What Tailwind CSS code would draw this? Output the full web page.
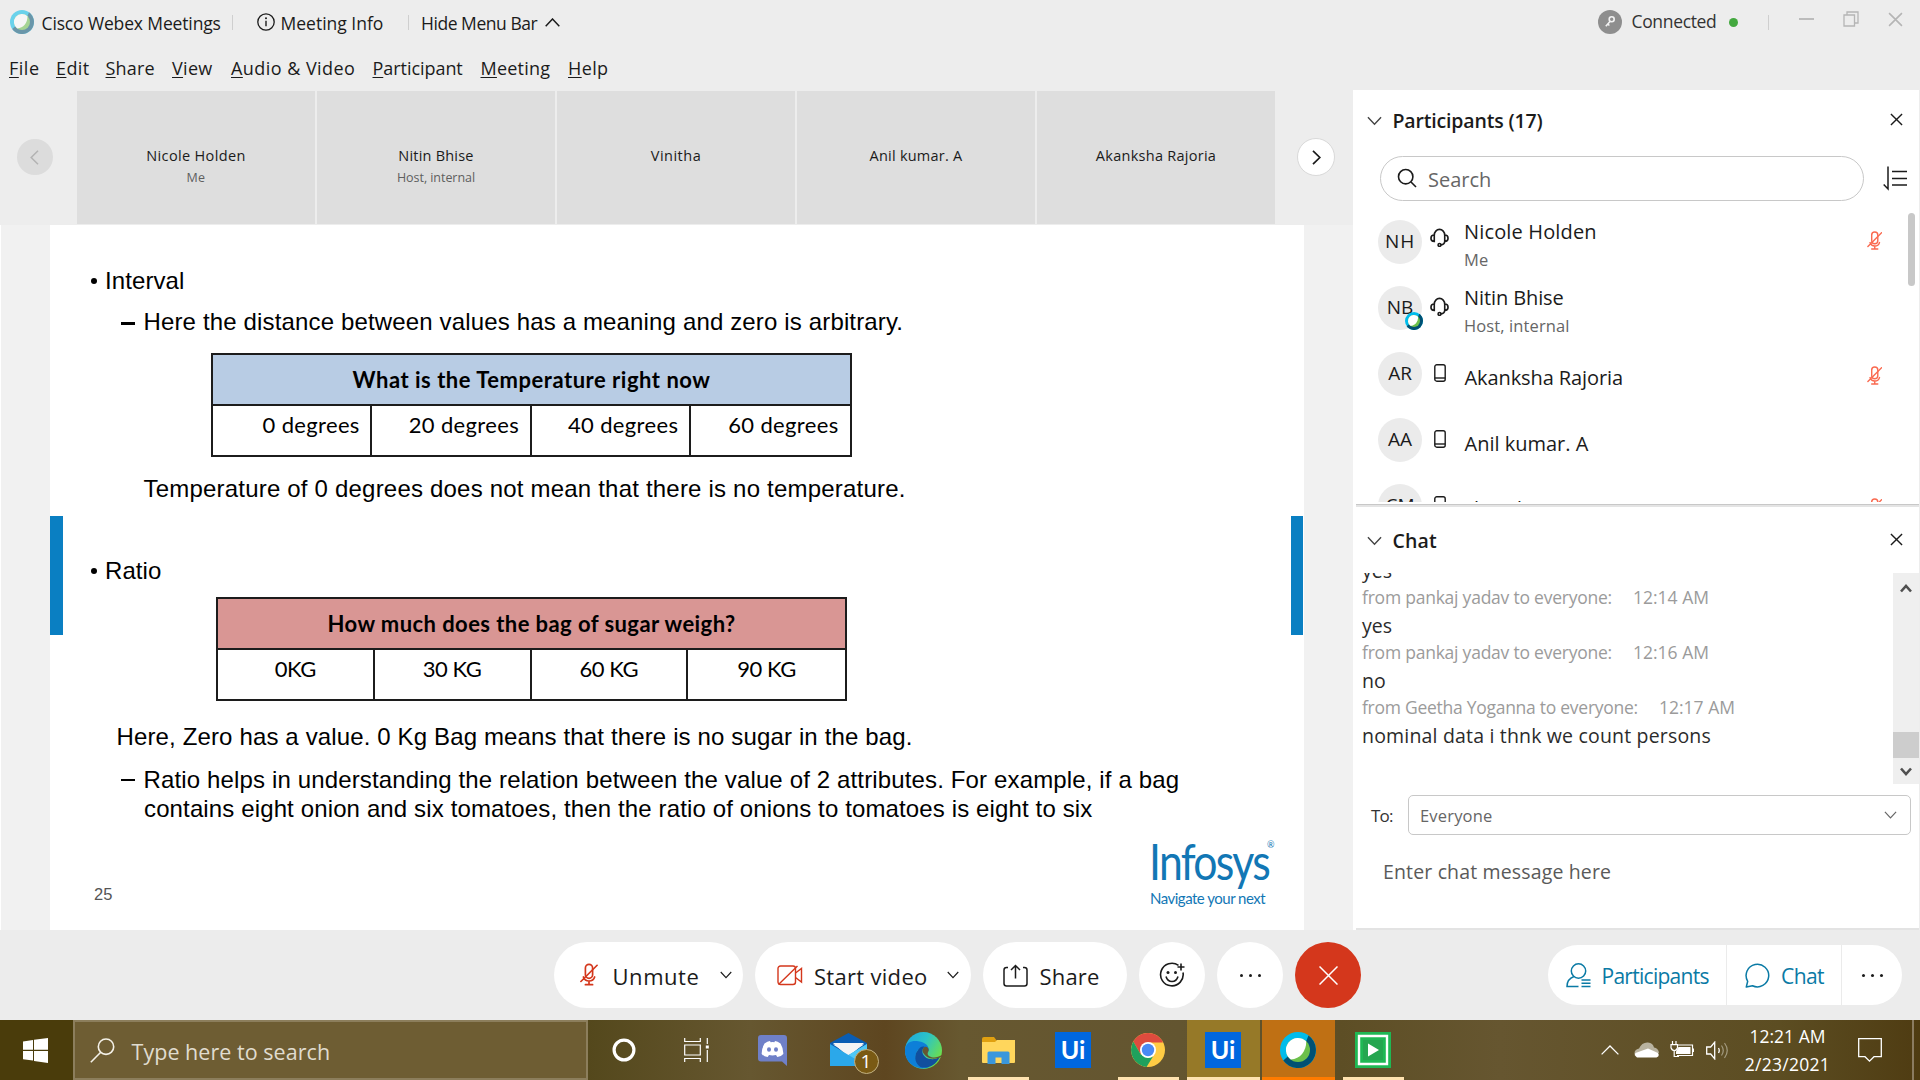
<!DOCTYPE html>
<html lang="en">
<head>
<meta charset="utf-8">
<title>Cisco Webex Meetings</title>
<script src="https://cdn.jsdelivr.net/npm/@tailwindcss/browser@4"></script>
</head>
<body class="w-[1920px] h-[1080px] overflow-hidden bg-[#ededed] font-['Open_Sans',sans-serif] text-[#1b1b1b] flex flex-col whitespace-nowrap">
<svg class="hidden">
  <symbol id="webex" viewBox="0 0 24 24">
    <circle cx="12" cy="12" r="12" fill="#00bceb"/>
    <path d="M19 2.3A12 12 0 1 1 2.2 19L5 16.5 17.5 6Z" fill="#005073"/>
    <circle cx="12" cy="12" r="8" fill="#6cc04a"/>
    <path d="M7.200 18.400A8 8 0 1 1 17.500 6.200C17.500 13 13.500 18 7.200 18.400Z" fill="#fff"/>
  </symbol>
  <symbol id="micoff" viewBox="0 0 16 20">
    <g fill="none" stroke="currentColor" stroke-width="1.5" stroke-linecap="round"><rect x="4.8" y="1" width="6.4" height="12.4" rx="3.2"/><path d="M3 12.2C4 15 6 15.8 8 15.8s4.200-.8 5-3.600M8 15.800v3M4.800 19h6.400M15.200 1.800.8 16.200"/></g>
  </symbol>
  <symbol id="headset" viewBox="0 0 20 20">
    <g fill="none" stroke="currentColor" stroke-width="1.7"><path d="M4.500 8.500V7.500a5.500 6 0 0 1 11 0v1M4.500 7.300C2 7.300 1 9 1 10.700s1 3.400 3.500 3.400ZM15.500 7.300c2.500 0 3.500 1.700 3.500 3.400s-1 3.400-3.500 3.400ZM15.500 14c0 2.500-2 3.600-4 3.800"/><circle cx="10" cy="17.800" r="1.500"/></g>
  </symbol>
  <symbol id="phone" viewBox="0 0 12 18">
    <g fill="none" stroke="currentColor" stroke-width="1.400"><rect x=".8" y=".8" width="10.400" height="16.400" rx="2"/><path d="M.8 14h10.400"/></g>
  </symbol>
  <symbol id="down" viewBox="0 0 16 10"><path d="M1 1l7 7.500L15 1" fill="none" stroke="currentColor" stroke-width="1.500"/></symbol>
  <symbol id="x" viewBox="0 0 14 14"><path d="M1 1l12 12M13 1L1 13" fill="none" stroke="currentColor" stroke-width="1.500"/></symbol>
</svg>

<header class="h-[90px] shrink-0">
  <div class="h-[44px] flex">
    <div class="w-[232px] flex pl-[10px]">
      <svg class="mt-[10px] size-6 opacity-55"><use href="#webex"/></svg>
      <span class="ml-[7.500px] mt-[11px] text-[17.5px] leading-6 tracking-[-0.14px]">Cisco Webex Meetings</span>
    </div>
    <div class="mt-[15px] w-px h-[15px] bg-[#cfcfcf]"></div>
    <div class="w-[174.500px] flex pl-[23.500px]">
      <svg class="mt-[13px] size-[18px]" viewBox="0 0 18 18"><circle cx="9" cy="9" r="8.200" fill="none" stroke="#1b1b1b" stroke-width="1.300"/><path d="M9 7.800v5.400" stroke="#1b1b1b" stroke-width="1.400"/><circle cx="9" cy="5.200" r="1" fill="#1b1b1b"/></svg>
      <span class="ml-[6px] mt-[11px] text-[17.5px] leading-6">Meeting Info</span>
    </div>
    <div class="mt-[15px] w-px h-[15px] bg-[#cfcfcf]"></div>
    <div class="flex pl-[12.500px]">
      <span class="mt-[11px] text-[17.5px] leading-6 tracking-[-0.46px]">Hide Menu Bar</span>
      <svg class="ml-[8px] mt-[18px] w-[15px] h-[9px]" viewBox="0 0 15 9"><path d="M.7 8.300 7.500 1l6.800 7.300" fill="none" stroke="#1b1b1b" stroke-width="1.500"/></svg>
    </div>
    <div class="ml-auto w-[322px] flex">
      <svg class="mt-[10px] size-6" viewBox="0 0 24 24"><circle cx="12" cy="12" r="12" fill="#8e8e8e"/><g fill="none" stroke="#f2f2f2" stroke-width="1.600"><circle cx="13.700" cy="9.300" r="2.500"/><path d="M12.200 11.300 7.800 16.200M9.800 14l1.600 1.500"/></g></svg>
      <span class="ml-[9.500px] w-[97.500px] mt-[9px] text-[17.500px] leading-6 tracking-[-0.34px] text-[#333]">Connected</span>
      <span class="mt-[18px] size-[9px] rounded-full bg-[#43a83f]"></span>
      <div class="mt-[15px] ml-[30px] w-px h-[15px] bg-[#cfcfcf]"></div>
      <div class="ml-[29.500px] mt-[18px] w-[15px] h-[2px] bg-[#bcbcbc]"></div>
      <svg class="ml-[29.500px] mt-[11px] w-[16px] h-[16px]" viewBox="0 0 16 16"><path d="M1 4h10.500v11H1zM4 4V1h11v11h-3.500" fill="none" stroke="#b5b5b5" stroke-width="1.300"/></svg>
      <svg class="ml-[29px] mt-[12px] size-[15px] text-[#b5b5b5]"><use href="#x"/></svg>
    </div>
  </div>
  <nav class="flex pl-[9px] pt-[12px] text-[18px] leading-6">
    <span class="w-[47px] tracking-[0.5px]"><u class="underline-offset-2">F</u>ile</span>
    <span class="w-[49.500px] tracking-[0.4px]"><u class="underline-offset-2">E</u>dit</span>
    <span class="w-[66.500px] tracking-[0.2px]"><u class="underline-offset-2">S</u>hare</span>
    <span class="w-[59px] tracking-[0.3px]"><u class="underline-offset-2">V</u>iew</span>
    <span class="w-[141.500px] tracking-[0.45px]"><u class="underline-offset-2">A</u>udio &amp; Video</span>
    <span class="w-[108px] tracking-[-0.05px]"><u class="underline-offset-2">P</u>articipant</span>
    <span class="w-[87.500px] tracking-[0.22px]"><u class="underline-offset-2">M</u>eeting</span>
    <span class="tracking-[0.4px]"><u class="underline-offset-2">H</u>elp</span>
  </nav>
</header>

<main class="h-[840px] shrink-0 flex">
  <section class="w-[1353px] flex flex-col">
    <div class="h-[135px] flex pt-px">
      <div class="w-[77px] pt-[48px] pl-[17px]">
        <div class="size-9 rounded-full bg-[#dcdcdc] flex items-center justify-center pr-px"><svg class="w-[9px] h-[15px]" viewBox="0 0 9 15"><path d="M8 .8 1.200 7.500 8 14.200" fill="none" stroke="#b3b3b3" stroke-width="1.500"/></svg></div>
      </div>
      <div class="flex gap-[2px] h-[133px] text-center text-[14.500px] leading-5">
        <div class="w-[238px] bg-[#dedede] pt-[55px] tracking-[0.35px]">Nicole Holden<div class="text-[12.500px] text-[#5f5f5f] tracking-[0.3px] mt-[2px]">Me</div></div>
        <div class="w-[238px] bg-[#dedede] pt-[55px] tracking-[0.21px]">Nitin Bhise<div class="text-[12.500px] text-[#5f5f5f] tracking-[-0.05px] mt-[2px]">Host, internal</div></div>
        <div class="w-[238px] bg-[#dedede] pt-[55px] tracking-[0.5px]">Vinitha</div>
        <div class="w-[238px] bg-[#dedede] pt-[55px] tracking-[0.24px]">Anil kumar. A</div>
        <div class="w-[238px] bg-[#dedede] pt-[55px] tracking-[0.27px]">Akanksha Rajoria</div>
      </div>
      <div class="pt-[47px] pl-[22px]">
        <div class="size-[38px] rounded-full bg-white border border-[#d9d9d9] flex items-center justify-center"><svg class="w-[9px] h-[15px]" viewBox="0 0 9 15"><path d="M1 .8 7.800 7.500 1 14.200" fill="none" stroke="#1b1b1b" stroke-width="1.700"/></svg></div>
      </div>
    </div>
    <div class="h-[705px] flex bg-[#f1f1f1]">
      <div class="w-px bg-white"></div>
      <article class="ml-[49px] w-[1254px] bg-white flex font-['Liberation_Sans',sans-serif] text-black text-[24px]">
        <div class="w-[13px] h-[119px] mt-[291px] shrink-0 bg-[#0a7fc2]"></div>
        <div class="w-[1228px] shrink-0 pt-[41px] flex flex-col leading-[30px]">
          <div class="flex items-center pl-[28px]"><span class="size-[6px] rounded-full bg-black"></span><span class="ml-[8px] tracking-[0.1px]">Interval</span></div>
          <div class="mt-[11px] flex pl-[58px]"><span class="w-[14px] h-[2.500px] bg-black mt-[15px]"></span><span class="ml-[8.500px] tracking-[0.15px]">Here the distance between values has a meaning and zero is arbitrary.</span></div>
          <div class="mt-[16px] ml-[148px] w-[641px] h-[104px] border-2 border-[#1c1c1c] flex flex-col font-['Lato',sans-serif] text-[22px]">
            <div class="h-[51px] bg-[#b8cce4] border-b-2 border-[#1c1c1c] flex justify-center font-bold leading-[50px] tracking-[0.52px]">What is the Temperature right now</div>
            <div class="grow grid grid-cols-4 text-right leading-[38px] tracking-[0.34px] divide-x-2 divide-[#1c1c1c]">
              <div class="pr-[10.500px]">0 degrees</div><div class="pr-[10.500px]">20 degrees</div><div class="pr-[10.500px]">40 degrees</div><div class="pr-[11.500px]">60 degrees</div>
            </div>
          </div>
          <div class="mt-[16.500px] pl-[80.500px] tracking-[0.2px]">Temperature of 0 degrees does not mean that there is no temperature.</div>
          <div class="mt-[52.500px] flex items-center pl-[28px]"><span class="size-[6px] rounded-full bg-black"></span><span class="ml-[8px] tracking-[0.08px]">Ratio</span></div>
          <div class="mt-[11px] ml-[153px] w-[631px] h-[104px] border-2 border-[#1c1c1c] flex flex-col font-['Lato',sans-serif] text-[22px]">
            <div class="h-[51px] bg-[#d99694] border-b-2 border-[#1c1c1c] flex justify-center font-bold leading-[50px] tracking-[0.43px]">How much does the bag of sugar weigh?</div>
            <div class="grow grid grid-cols-4 text-center leading-[38px] tracking-[-0.45px] divide-x-2 divide-[#1c1c1c]">
              <div>0KG</div><div>30 KG</div><div>60 KG</div><div>90 KG</div>
            </div>
          </div>
          <div class="mt-[20.500px] pl-[53.500px] tracking-[0.14px]">Here, Zero has a value. 0 Kg Bag means that there is no sugar in the bag.</div>
          <div class="mt-[13px] flex pl-[58px] leading-[29px]"><span class="w-[14px] h-[2.500px] bg-black mt-[14px]"></span><div class="ml-[8.500px]"><div class="tracking-[0.14px]">Ratio helps in understanding the relation between the value of 2 attributes. For example, if a bag</div><div class="tracking-[0.13px] pl-[0.500px]">contains eight onion and six tomatoes, then the ratio of onions to tomatoes is eight to six</div></div></div>
          <div class="flex mt-[15.500px] h-[85px]">
            <span class="mt-[36px] ml-[31px] text-[16.500px] text-[#555] leading-[40px]">25</span>
            <div class="ml-auto -mt-[5px] w-[142px] flex flex-col font-['Lato',sans-serif] text-[#1277b5]">
              <div class="flex h-[52px]"><span class="w-[118px] origin-left scale-x-[0.855] text-[50px] leading-[60px] tracking-[-2px] -mt-[2px]">Infosys</span><span class="text-[9px] leading-[10px] mt-[7px]">®</span></div>
              <span class="ml-px text-[15px] leading-[20px] tracking-[-0.5px] mt-[3px]">Navigate your next</span>
            </div>
          </div>
        </div>
        <div class="w-[12px] h-[119px] mt-[291px] shrink-0 bg-[#0a7fc2]"></div>
      </article>
    </div>
  </section>

  <aside class="w-[565.500px] bg-white flex flex-col">
    <div class="h-[66px] shrink-0 flex pl-[14px]">
      <svg class="w-[15px] h-[10px] mt-[26px] text-[#444]"><use href="#down"/></svg>
      <span class="ml-[10.500px] mt-[16.500px] text-[19.500px] leading-[28px] font-semibold tracking-[-0.16px]">Participants (17)</span>
      <svg class="ml-auto mr-[15.500px] mt-[23px] size-[13px]"><use href="#x"/></svg>
    </div>
    <div class="h-[44.500px] shrink-0 flex pl-[27px]">
      <div class="w-[484px] rounded-full border-[1.500px] border-[#c8c8c8] flex items-center pl-[16px]">
        <svg class="size-[20px]" viewBox="0 0 20 20"><g fill="none" stroke="#1b1b1b" stroke-width="1.600"><circle cx="8.700" cy="8.700" r="7.200"/><path d="m14 14 5 5"/></g></svg>
        <span class="ml-[11px] text-[20px] leading-[28px] mt-[3px] text-[#666]">Search</span>
      </div>
      <svg class="ml-[19px] mt-[10px] w-[25px] h-[25px]" viewBox="0 0 25 25"><path d="M5 .5v22.500L.7 18.500M9 5.500h15M9 12.500h15M9 19h15" fill="none" stroke="#1b1b1b" stroke-width="1.500"/></svg>
    </div>
    <div class="h-[301.500px] shrink-0 flex">
      <div class="w-[555px] pt-[8px] overflow-hidden text-[20px] leading-[26px]">
        <div class="h-[66px] flex pl-[25px]">
          <span class="mt-[11px] size-[44px] rounded-full bg-[#ebebeb] text-[19px] leading-[43px] text-center tracking-[0.8px]">NH</span>
          <svg class="ml-[8px] mt-[19.500px] size-[19px]"><use href="#headset"/></svg>
          <div class="ml-[15px] mt-[10.500px] tracking-[0.15px]">Nicole Holden<div class="text-[16.500px] leading-[22px] mt-[3.500px] text-[#666]">Me</div></div>
          <svg class="ml-auto mr-[26px] mt-[22.500px] w-[15.500px] h-[19px] text-[#fa6a50]"><use href="#micoff"/></svg>
        </div>
        <div class="h-[66px] flex pl-[25px]">
          <span class="relative mt-[11px] size-[44px] rounded-full bg-[#ebebeb] text-[19px] leading-[43px] text-center">NB<svg class="absolute -right-px bottom-0 size-[18px]"><use href="#webex"/></svg></span>
          <svg class="ml-[8px] mt-[22.500px] size-[19px]"><use href="#headset"/></svg>
          <div class="ml-[15px] mt-[10.500px] tracking-[-0.1px]">Nitin Bhise<div class="text-[16.500px] leading-[22px] mt-[3.500px] text-[#666] tracking-[0.11px]">Host, internal</div></div>
        </div>
        <div class="h-[66px] flex pl-[25px]">
          <span class="mt-[11px] size-[44px] rounded-full bg-[#ebebeb] text-[19px] leading-[43px] text-center">AR</span>
          <svg class="ml-[11.500px] mt-[23px] w-[12px] h-[18px]"><use href="#phone"/></svg>
          <div class="ml-[19px] mt-[24.500px] tracking-[-0.09px]">Akanksha Rajoria</div>
          <svg class="ml-auto mr-[26px] mt-[25.500px] w-[15.500px] h-[19px] text-[#fa6a50]"><use href="#micoff"/></svg>
        </div>
        <div class="h-[66px] flex pl-[25px]">
          <span class="mt-[11px] size-[44px] rounded-full bg-[#ebebeb] text-[19px] leading-[43px] text-center">AA</span>
          <svg class="ml-[11.500px] mt-[23px] w-[12px] h-[18px]"><use href="#phone"/></svg>
          <div class="ml-[19px] mt-[24.500px]">Anil kumar. A</div>
        </div>
        <div class="h-[66px] flex pl-[25px]">
          <span class="mt-[11px] size-[44px] rounded-full bg-[#ebebeb] text-[19px] leading-[43px] text-center">CM</span>
          <svg class="ml-[11.500px] mt-[23px] w-[12px] h-[18px]"><use href="#phone"/></svg>
          <div class="ml-[19px] mt-[23.500px]">chandra m</div>
          <svg class="ml-auto mr-[26px] mt-[25.500px] w-[15.500px] h-[19px] text-[#fa6a50]"><use href="#micoff"/></svg>
        </div>
      </div>
      <div class="mt-[12.500px] w-[7px] h-[73px] rounded-full bg-[#c8c8c8]"></div>
    </div>
    <div class="mt-[2px] ml-[3px] h-[3px] shrink-0 bg-[#e4e4e4] border-t border-[#c8c8c8]"></div>
    <div class="h-[66px] shrink-0 flex pl-[14px]">
      <svg class="w-[15px] h-[10px] mt-[28.500px] text-[#444]"><use href="#down"/></svg>
      <span class="ml-[10.500px] mt-[19.500px] text-[19.500px] leading-[28px] font-semibold tracking-[0.11px]">Chat</span>
      <svg class="ml-auto mr-[15.500px] mt-[25.500px] size-[13px]"><use href="#x"/></svg>
    </div>
    <div class="h-[211px] shrink-0 flex overflow-hidden">
      <div class="w-[540px] pl-[9px] text-[19.500px] leading-[27.500px] text-[#2b2b2b] overflow-hidden">
        <div class="-mt-[17px] pt-px -mb-px">yes</div>
        <div class="flex text-[17.500px] text-[#9b9b9b]"><span class="w-[271px] tracking-[-0.23px]">from pankaj yadav to everyone:</span>12:14 AM</div>
        <div class="pt-px -mb-px">yes</div>
        <div class="flex text-[17.500px] text-[#9b9b9b]"><span class="w-[271px] tracking-[-0.23px]">from pankaj yadav to everyone:</span>12:16 AM</div>
        <div class="pt-px -mb-px">no</div>
        <div class="flex text-[17.500px] text-[#9b9b9b]"><span class="w-[297px] tracking-[-0.27px]">from Geetha Yoganna to everyone:</span>12:17 AM</div>
        <div class="pt-px tracking-[0.18px]">nominal data i thnk we count persons</div>
      </div>
      <div class="grow bg-[#efefef] flex flex-col items-center">
        <svg class="mt-[10.500px] w-[12px] h-[9px]" viewBox="0 0 12 9"><path d="M1 7.500 6 2l5 5.500" fill="none" stroke="#505050" stroke-width="2.600"/></svg>
        <div class="mt-[139.500px] w-full h-[26px] bg-[#cdcdcd]"></div>
        <svg class="mt-[9px] w-[12px] h-[9px]" viewBox="0 0 12 9"><path d="M1 1.500 6 7l5-5.500" fill="none" stroke="#505050" stroke-width="2.600"/></svg>
      </div>
    </div>
    <div class="mt-[11px] shrink-0 h-[39.500px] flex pl-[18px] pr-[7.500px]">
      <span class="w-[37px] pt-px text-[17px] leading-[40px] tracking-[-0.8px] text-[#333]">To:</span>
      <div class="grow border-[1.500px] border-[#c8c8c8] rounded-[5px] flex items-center pl-[11px] pr-[13px] text-[16.500px] tracking-[0.18px] text-[#666]"><span class="mt-[4px]">Everyone</span><svg class="ml-auto w-[13px] h-[8px] mt-px"><use href="#down"/></svg></div>
    </div>
    <div class="pl-[30px] mt-[23.500px] text-[19.500px] leading-[28px] tracking-[0.15px] text-[#5a5a5a]">Enter chat message here</div>
    <div class="mt-auto h-[2px] ml-[3px] bg-[#e3e3e3]"></div>
  </aside>
</main>

<div class="h-[90px] shrink-0 bg-[#ececec] flex pt-[12px] pl-[554px] pr-[18px]">
  <div class="flex gap-[12px] h-[66px] text-[22px]">
    <div class="w-[189px] rounded-full bg-white flex items-center pl-[26px]">
      <svg class="w-[18px] h-[23px] -mt-[2px] text-[#d4371c]"><use href="#micoff"/></svg><span class="ml-[14.500px] w-[107px] mt-[3px] tracking-[0.55px]">Unmute</span><svg class="w-[12px] h-[8px] -mt-px"><use href="#down"/></svg>
    </div>
    <div class="w-[216px] rounded-full bg-white flex items-center pl-[22px]">
      <svg class="w-[26px] h-[21px]" viewBox="0 0 26 21"><g fill="none" stroke="#d4371c" stroke-width="1.400"><rect x="1" y="1" width="17.500" height="18.500" rx="2.500"/><path d="M18.500 12.500 24.500 17V3.500L18.500 8M1.500 19.500 20.500 1"/></g></svg><span class="ml-[11px] w-[133px] mt-[3px] tracking-[0.3px]">Start video</span><svg class="w-[12px] h-[8px] -mt-px"><use href="#down"/></svg>
    </div>
    <div class="w-[144px] rounded-full bg-white flex items-center pl-[20px]">
      <svg class="w-[25px] h-[23px]" viewBox="0 0 25 23"><path d="M5 3.500H3.500Q1 3.500 1 6v13.500Q1 22 3.500 22h18q2.500 0 2.500-2.500V6q0-2.500-2.500-2.500H20M12.500 14.500V1.500M8 6l4.500-4.500L17 6" fill="none" stroke="#1b1b1b" stroke-width="1.500"/></svg><span class="ml-[11.500px] mt-[3px] tracking-[0.18px]">Share</span>
    </div>
    <div class="w-[66px] rounded-full bg-white flex items-center justify-center">
      <svg class="size-[26px]" viewBox="0 0 26 26"><path d="M19.500 3.400A11.300 11.300 0 1 0 24 10.500" fill="none" stroke="#1b1b1b" stroke-width="1.600"/><path d="M7 14.500q1.500 5 6 5t6-5M22 1.500v7M18.500 5h7" fill="none" stroke="#1b1b1b" stroke-width="1.600"/><circle cx="9" cy="10.500" r="1.500" fill="#1b1b1b"/><circle cx="16.500" cy="10.500" r="1.500" fill="#1b1b1b"/></svg>
    </div>
    <div class="w-[66px] rounded-full bg-white flex items-center justify-center gap-[6px]"><i class="size-[3px] rounded-full bg-[#1b1b1b]"></i><i class="size-[3px] rounded-full bg-[#1b1b1b]"></i><i class="size-[3px] rounded-full bg-[#1b1b1b]"></i></div>
    <div class="w-[66px] rounded-full bg-[#d4371c] flex items-center justify-center text-white"><svg class="size-[19px]" viewBox="0 0 19 19"><path d="m.5.5 18 18M18.500.5l-18 18" stroke="#fff" stroke-width="1.500"/></svg></div>
  </div>
  <div class="ml-auto mt-[3px] w-[354px] h-[60px] rounded-full bg-white flex overflow-hidden text-[21px] text-[#0a7aa5]">
    <div class="w-[179px] flex items-center pl-[18px] border-r border-[#ebebeb]">
      <svg class="size-[25px]" viewBox="0 0 25 25"><g fill="none" stroke="#0a7aa5" stroke-width="1.500"><circle cx="12.500" cy="8" r="7.200"/><path d="M8 13.500Q1 16 1 23.500h11.500M15.500 17H24.500M15.500 20.300h9M15.500 23.500h9"/></g></svg><span class="ml-[10.500px] mt-[4px] tracking-[-0.72px]">Participants</span>
    </div>
    <div class="w-[114.500px] flex items-center pl-[18px] border-r border-[#ebebeb]">
      <svg class="size-[25px]" viewBox="0 0 25 25"><path d="M1.300 24 2.700 18.300A11.300 11.300 0 1 1 7.500 22.700Z" fill="none" stroke="#0a7aa5" stroke-width="1.500" stroke-linejoin="round"/></svg><span class="ml-[11px] mt-[4px] tracking-[-0.59px]">Chat</span>
    </div>
    <div class="flex items-center pl-[20px] gap-[6px]"><i class="size-[3px] rounded-full bg-[#1b1b1b]"></i><i class="size-[3px] rounded-full bg-[#1b1b1b]"></i><i class="size-[3px] rounded-full bg-[#1b1b1b]"></i></div>
  </div>
</div>

<footer class="h-[60px] shrink-0 flex text-white bg-[linear-gradient(90deg,#4a3c0b_0px,#4a3c0b_72px,#54481c_588px,#665730_750px,#5e4620_885px,#675830_960px,#635530_1180px,#5d4e25_1340px,#665630_1500px,#5c4d22_1780px,#4f3c12_1920px)]">
  <div class="w-[72.500px] pr-px flex items-center justify-center"><svg class="size-[25px]" viewBox="0 0 25 25" fill="#fff"><path d="M0 3.500 10 2v9.700H0zM11 1.800 25 0v11.700H11zM0 12.900h10v9.600L0 21.200zM11 12.900h14V25l-14-2z"/></svg></div>
  <div class="w-[515.500px] bg-[#6e5d33] border-2 border-[#8c7e5c] flex items-center pl-[15px]">
    <svg class="size-[25px]" viewBox="0 0 25 25"><g fill="none" stroke="#f4f1e8" stroke-width="1.600"><circle cx="16" cy="8.700" r="7.700"/><path d="M10.500 14.500.8 24.300"/></g></svg>
    <span class="ml-[17px] mt-[5px] text-[21.500px] text-[#e0dccf] tracking-[0.04px]">Type here to search</span>
  </div>
  <div class="w-[72px] flex items-center justify-center"><svg class="size-[24px]" viewBox="0 0 24 24"><circle cx="12" cy="12" r="9.900" fill="none" stroke="#fff" stroke-width="3.200"/></svg></div>
  <div class="w-[75.500px] pr-[3.500px] flex items-center justify-center"><svg class="w-[25px] h-[24px]" viewBox="0 0 25 24"><path d="M.7 0v3.500h15.600V0M.7 7h15.600v10H.7zM.7 24v-3.500h15.600V24M23.300 0v6M23.300 12v12" fill="none" stroke="#fff" stroke-width="1.200"/><path d="M21.800 7.500h3v3h-3z" fill="#fff"/></svg></div>
  <div class="w-[75px] pr-px flex items-center justify-center"><svg class="w-[29px] h-[31px]" viewBox="0 0 29 31"><path d="M3 0h23q3 0 3 3v28l-5-4.500H3q-3 0-3-3V3q0-3 3-3Z" fill="#6f80c8"/><path d="M6.500 8.500Q9.500 6 12 6l.6 1.200q2-.3 3.800 0L17 6q2.500 0 5.500 2.500 3 5 2.800 10.500-2.500 3-6 3l-1.300-2q-3.500.8-7 0L9.700 22q-3.500 0-6-3Q3.500 13.500 6.500 8.500Z" fill="#fff"/><ellipse cx="11" cy="14.500" rx="2" ry="2.200" fill="#6f80c8"/><ellipse cx="18" cy="14.500" rx="2" ry="2.200" fill="#6f80c8"/></svg></div>
  <div class="w-[75px] flex items-center justify-center"><div class="relative"><svg class="w-[37px] h-[34px]" viewBox="0 0 37 34"><path d="M0 10 18.500 0 37 10v8H0Z" fill="#0a5db3"/><path d="M3 10h31L18.500 24Z" fill="#f4f4f4"/><path d="M0 11 18.500 22 37 11v22H0Z" fill="#2ba8ea"/><path d="M3 11.500h31L19 21.500Z" fill="#f4f4f4"/><path d="M37 11 18.500 22 37 33Z" fill="#4fc8f5"/></svg><span class="absolute left-[24px] top-[16px] size-[25px] rounded-full bg-[#7a5a14] border border-[#c3b283] text-[19px] leading-[23px] text-center">1</span></div></div>
  <div class="w-[75px] flex items-center justify-center"><svg class="size-[37px]" viewBox="0 0 36 36"><defs><linearGradient id="eg" x1="0" y1="0" x2="1" y2=".6"><stop offset="0" stop-color="#1da5e0"/><stop offset=".5" stop-color="#2bc3c8"/><stop offset="1" stop-color="#6ee04a"/></linearGradient></defs><circle cx="18" cy="18" r="18" fill="url(#eg)"/><path d="M0 17C1 9 8 8 13 9c8 1 11 6 10 10-1-4-9-6-12 1-3 8 5 15 13 14-12 5-25-4-24-17Z" fill="#0d7fd8"/><path d="M11 20c3-5 4-6 8-6-4 4-2 10 4 12 5 1 8 0 11-2-4 9-13 12-19 10-5-3-6-9-4-14Z" fill="#114f9e"/><path d="M19 14.500c3-1 5 2 3.500 5-1 2-.5 4 3.500 5 4 .8 7-.5 11-2.500v2l-3 .500c-5 2.500-11 1.500-14-1.500-3.500-3.500-4-6-1-8.500Z" fill="#665631"/></svg></div>
  <div class="w-[75px] flex flex-col items-center pt-[17px]"><svg class="w-[33px] h-[27px]" viewBox="0 0 33 27"><path d="M0 2q0-2 2-2h10l3 4v6H0Z" fill="#e0a010"/><path d="M0 5h13l2-2h18v22q0 1-1 1H1q-1 0-1-1Z" fill="#ffd65c"/><path d="M5.500 27V16q0-1.500 1.500-1.500h19q1.500 0 1.500 1.500v11h-8v-6.500h-6V27Z" fill="#3a97dc"/></svg><div class="mt-auto w-[61px] h-[3px] bg-[#ffe3b0]"></div></div>
  <div class="w-[75px] flex items-center justify-center"><div class="size-[36px] bg-[#0067df] text-white font-bold text-[25px] leading-[35px] text-center font-['Lato',sans-serif]">Ui</div></div>
  <div class="w-[75px] flex flex-col items-center pt-[13px]"><svg class="size-[34px]" viewBox="0 0 34 34"><circle cx="17" cy="17" r="17" fill="#fc4"/><path d="M2.300 8.500A17 17 0 0 1 31.700 8.500L31.700 9.500H17L9.600 21.300Z" fill="#de4b3e"/><path d="M2.300 8.500 9.600 21.300 17 25l5-1.500L15.500 33.900A17 17 0 0 1 2.300 8.500Z" fill="#1fa15d"/><circle cx="17" cy="17" r="8" fill="#fff"/><circle cx="17" cy="17" r="6.200" fill="#4a8af4"/></svg><div class="mt-auto w-[61px] h-[3px] bg-[#ffe3b0]"></div></div>
  <div class="w-[75px] flex justify-center"><div class="w-[73px] bg-[#967928] flex flex-col items-center pt-[12px]"><div class="size-[36px] bg-[#0067df] text-white font-bold text-[25px] leading-[35px] text-center font-['Lato',sans-serif]">Ui</div><div class="mt-auto w-full h-[3px] bg-[#ffe3b0]"></div></div></div>
  <div class="w-[75px] flex justify-center"><div class="w-[73px] bg-[#bf7014] flex flex-col items-center pt-[12px]"><svg class="size-[36px]"><use href="#webex"/></svg><div class="mt-auto w-full h-[3px] bg-[#ff7b00]"></div></div></div>
  <div class="w-[75px] flex flex-col items-center pt-[12px]"><svg class="size-[36px]" viewBox="0 0 36 36"><path d="M0 0h36v36H0z" fill="#1fb854"/><path d="M4 4h28v28H4z" fill="none" stroke="#fff" stroke-width="2.400"/><path d="M8 8h20v20H8z" fill="#25a650"/><path d="M13 11.500 24 18l-11 6.500Z" fill="#fff"/></svg><div class="mt-auto w-[61px] h-[3px] bg-[#ffe3b0]"></div></div>
  <div class="ml-auto w-[319px] flex">
    <svg class="w-[18px] h-[10px] mt-[25px]" viewBox="0 0 18 10"><path d="M.6 9.400 9 1l8.400 8.400" fill="none" stroke="#fff" stroke-width="1.300"/></svg>
    <svg class="ml-[14.500px] w-[25px] h-[16px] mt-[22px]" viewBox="0 0 25 16"><path d="M1 14Q-1 8 5 6.500 8 0 14 .5q5 .5 6 5 4 .5 5 5L20 15Z" fill="#b9b3a0"/><path d="M3 15.500Q0 13.500 1.500 11L14 6.500 24 11q2 3-1.500 4.500Z" fill="#fff"/></svg>
    <svg class="ml-[11px] w-[24px] h-[17px] mt-[21px]" viewBox="0 0 24 17"><path d="M7 4h15.500v10.500H7M23.500 7.500v3.500M2.500 0v3.500M6 0v3.500M1 3.700h6.500v3q-1 2.800-3.200 2.800T1 6.700ZM4.200 9.500v6H9" fill="none" stroke="#fff" stroke-width="1.200"/><path d="M8.500 6h12v7H6V10.500Z" fill="#fff"/></svg>
    <svg class="ml-[12.500px] w-[23px] h-[19px] mt-[21px]" viewBox="0 0 23 19"><path d="M.7 6h4l4-4.800v16.600L4.700 13h-4ZM12.500 7q1.500 2.500 0 5" fill="none" stroke="#fff" stroke-width="1.300"/><path d="M15.500 4.500q3.500 5 0 10M18.500 2q5.500 7.500 0 15" fill="none" stroke="#a39b80" stroke-width="1.200"/></svg>
    <div class="ml-[12.500px] w-[92px] pt-[1.500px] text-[17.500px] leading-[28px] text-center"><div>12:21 AM</div><div class="tracking-[0.27px]">2/23/2021</div></div>
    <svg class="ml-[24px] w-[24px] h-[25px] mt-[17.500px]" viewBox="0 0 24 25"><path d="M.7.7h22.600v18H16l-4.500 4.500L7 18.700H.7Z" fill="none" stroke="#fff" stroke-width="1.300"/></svg>
    <div class="ml-auto mr-[6px] w-[2px] bg-[#8b7c61]"></div>
  </div>
</footer>
</body>
</html>
